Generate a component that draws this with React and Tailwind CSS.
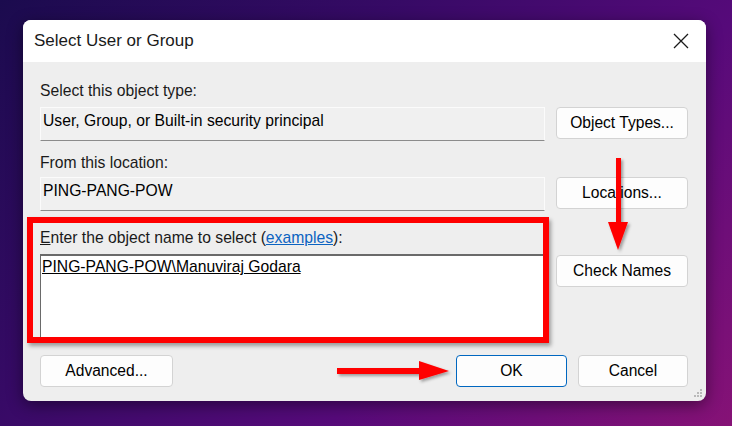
import React from 'react';

function WinButton({ children, primary, className = '' }) {
  return (
    <button
      className={`h-[32px] rounded-[4px] border bg-[#fdfdfd] text-[15.6px] text-black ${primary ? 'border-[#0067c0]' : 'border-[#d3d3d3]'} ${className}`}
    >
      {children}
    </button>
  );
}

function ReadField({ children }) {
  return (
    <div className="h-[34px] border border-[#fbfbfb] border-b-[#8b8b8b] bg-[#f0f0f0] px-[2px] pt-[3px] text-[15.7px] leading-[20px] text-black">
      {children}
    </div>
  );
}

export default function App() {
  return (
    <div
      className="relative h-[426px] w-[732px] overflow-hidden bg-[linear-gradient(135deg,#1b0b4e_0%,#370a66_35%,#560a7a_65%,#861276_100%)] pl-[23px] pt-[20px]"
      style={{ fontFamily: '"Liberation Sans", Arial, sans-serif' }}
    >
      <div className="flex h-[381px] w-[683px] flex-col overflow-hidden rounded-[8px] bg-[#eeeeee] shadow-[0_4px_16px_rgba(0,0,0,0.45)]">
        {/* title bar */}
        <div className="flex h-[42px] shrink-0 items-center justify-between bg-white pl-[11px] pr-[17px]">
          <span className="text-[17px] text-[#1a1a1a]">Select User or Group</span>
          <svg width="16" height="16" viewBox="0 0 16 16" className="text-[#1a1a1a]">
            <path d="M1 1 L15 15 M15 1 L1 15" stroke="currentColor" strokeWidth="1.3" fill="none" />
          </svg>
        </div>

        {/* body */}
        <div className="relative flex flex-1 flex-col pl-[17px] pr-[18px] pt-[19px]">
          <div className="flex gap-[11px]">
            <div className="flex-1">
              <div className="mb-[6px] h-[20px] text-[15.7px] leading-[20px] text-[#1a1a1a]">Select this object type:</div>
              <ReadField>User, Group, or Built-in security principal</ReadField>
            </div>
            <WinButton className="mt-[26px] w-[132px]">Object Types...</WinButton>
          </div>

          <div className="mt-[12px] flex gap-[11px]">
            <div className="flex-1">
              <div className="mb-[4px] h-[20px] text-[15.7px] leading-[20px] text-[#1a1a1a]">From this location:</div>
              <ReadField>PING-PANG-POW</ReadField>
            </div>
            <WinButton className="mt-[24px] w-[132px]">Locations...</WinButton>
          </div>

          <div className="mt-[17px] flex gap-[13px]">
            <div className="flex-1">
              <div className="mb-[6px] h-[20px] text-[15.7px] leading-[20px] text-[#1a1a1a]">
                <span className="underline">E</span>nter the object name to select (
                <span className="text-[#0b63c1] underline">examples</span>):
              </div>
              <div className="h-[84px] border-l-[1px] border-t-[2px] border-[#6a6a6a] bg-white px-[1px] pt-[1px] text-[15.7px] leading-[20px] text-black">
                <span className="underline">PING-PANG-POW\Manuviraj Godara</span>
              </div>
            </div>
            <WinButton className="mt-[27px] w-[132px]">Check Names</WinButton>
          </div>

          <div className="mt-[17px] flex items-center">
            <WinButton className="w-[133px]">Advanced...</WinButton>
            <div className="flex-1" />
            <WinButton primary className="w-[111px]">OK</WinButton>
            <WinButton className="ml-[11px] w-[110px]">Cancel</WinButton>
          </div>

          {/* resize grip */}
          <svg width="10" height="10" viewBox="0 0 10 10" className="absolute bottom-[3px] right-[3px]">
            <g fill="#b9b9b9">
              <rect x="7" y="1" width="2" height="2" />
              <rect x="4" y="4" width="2" height="2" />
              <rect x="7" y="4" width="2" height="2" />
              <rect x="1" y="7" width="2" height="2" />
              <rect x="4" y="7" width="2" height="2" />
              <rect x="7" y="7" width="2" height="2" />
            </g>
          </svg>
        </div>
      </div>

      {/* red highlight box */}
      <div className="absolute left-[27px] top-[217px] h-[126px] w-[522px] border-[6px] border-[#ff0000] shadow-[2px_3px_4px_rgba(0,0,0,0.35)]" />

      {/* vertical arrow */}
      <svg width="30" height="100" viewBox="0 0 30 100" className="absolute left-[603px] top-[155px]">
        <defs>
          <filter id="sh1" x="-50%" y="-20%" width="200%" height="140%">
            <feDropShadow dx="2" dy="2" stdDeviation="1.5" floodColor="#000" floodOpacity="0.35" />
          </filter>
        </defs>
        <g filter="url(#sh1)" fill="#ff0000">
          <rect x="13" y="3" width="5" height="66" />
          <polygon points="5,67 25,67 15,95" />
        </g>
      </svg>

      {/* horizontal arrow */}
      <svg width="120" height="30" viewBox="0 0 120 30" className="absolute left-[334px] top-[356px]">
        <defs>
          <filter id="sh2" x="-20%" y="-50%" width="140%" height="200%">
            <feDropShadow dx="2" dy="2" stdDeviation="1.5" floodColor="#000" floodOpacity="0.35" />
          </filter>
        </defs>
        <g filter="url(#sh2)" fill="#ff0000">
          <rect x="3" y="12" width="84" height="6" />
          <polygon points="85,5 115,15 85,24" />
        </g>
      </svg>
    </div>
  );
}
